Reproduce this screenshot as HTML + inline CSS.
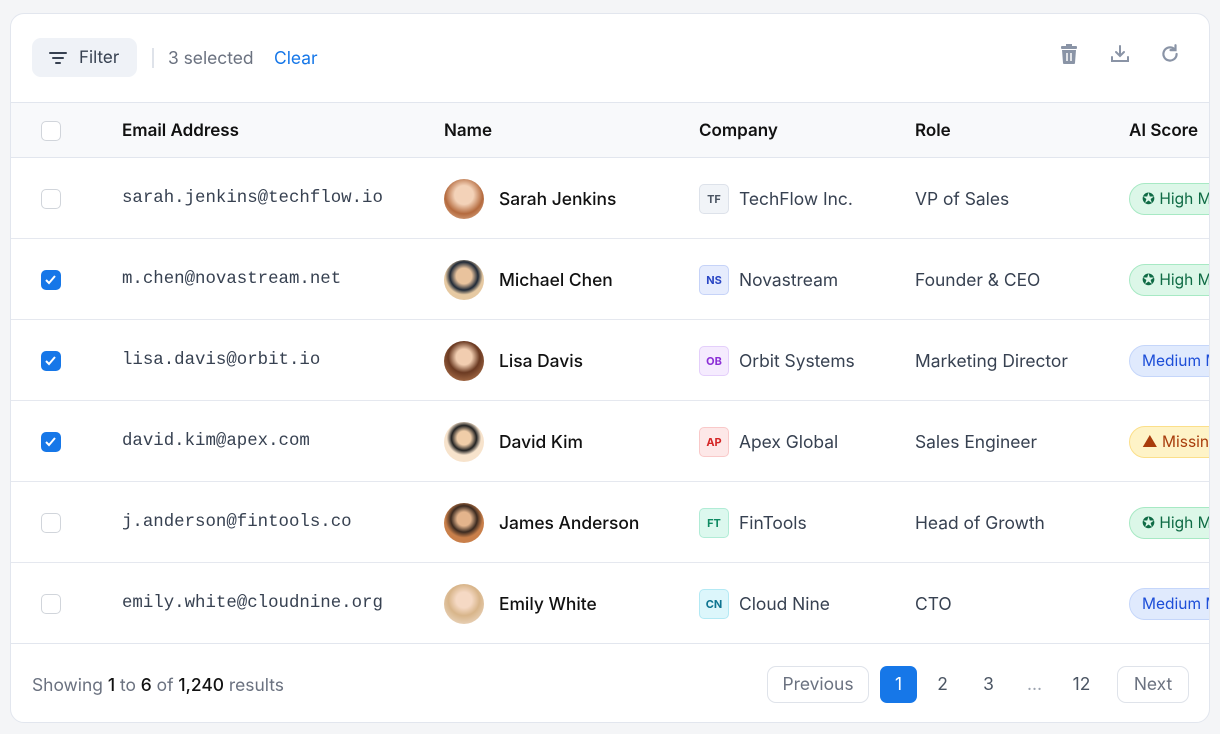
<!DOCTYPE html>
<html><head><meta charset="utf-8"><style>
*{box-sizing:border-box;margin:0;padding:0}
body{width:1220px;height:734px;background:#f4f5f7;font-family:"Inter","Liberation Sans",sans-serif;color:#111827;position:relative;overflow:hidden}
.card{position:absolute;left:10px;top:13px;width:1200px;height:710px;background:#fff;border:1px solid #e2e6ee;border-radius:14px;overflow:hidden}
.abs{position:absolute}
.filter{left:21px;top:24px;width:105px;height:39px;background:#eff2f7;border-radius:9px;font-size:17px;color:#374151}
.hdr{left:0;top:88px;width:1200px;height:56px;background:#f8f9fb;border-top:1px solid #e2e6ee;border-bottom:1px solid #e2e6ee}
.hdr span{position:absolute;top:18px;font-size:17px;font-weight:600;color:#111}
.row{position:absolute;left:0;width:1200px;height:81px;border-bottom:1px solid #e5e8ef}
.cb{position:absolute;left:30px;top:31px;width:20px;height:20px;border:1.5px solid #d1d5db;border-radius:5px;background:#fff}
.cb.on{background:#1677e8;border-color:#1677e8}
.email{position:absolute;left:111px;top:31px;font-family:"Liberation Mono",monospace;font-size:17.4px;color:#374151}
.av{position:absolute;left:433px;top:21px;width:40px;height:40px;border-radius:50%;overflow:hidden}
.name{position:absolute;left:488px;top:31px;font-size:17.4px;font-weight:500;color:#111}
.co{position:absolute;left:688px;top:26px;width:30px;height:30px;border-radius:5px;font-size:11px;font-weight:700;text-align:center;line-height:28px;border:1px solid}
.cot{position:absolute;left:728px;top:31px;font-size:17.4px;color:#374151}
.role{position:absolute;left:904px;top:31px;font-size:17.4px;color:#374151}
.pill{position:absolute;left:1118px;top:25px;width:140px;height:32px;border-radius:16px;border:1px solid;font-size:15.5px;line-height:30px;padding-left:12px;white-space:nowrap}
.pg{position:absolute;top:652px;height:37px;font-size:17.4px;color:#4b5563;text-align:center;line-height:37px}
.pgb{border:1px solid #dfe3ea;border-radius:9px;color:#6b7280;line-height:35px}
</style></head><body>
<div class="card">
<div class="abs filter"><svg class="abs" style="left:17px;top:13px" width="18" height="14" viewBox="0 0 18 14"><path d="M1 2h16M4 7h10M7 12h4" stroke="#374151" stroke-width="2" stroke-linecap="round"/></svg><span class="abs" style="left:47px;top:10px">Filter</span></div>
<div class="abs" style="left:141px;top:34px;width:2px;height:20px;background:#dfe3ea"></div>
<div class="abs" style="left:157px;top:34px;font-size:17.4px;color:#6b7280">3 selected</div>
<div class="abs" style="left:263px;top:34px;font-size:17.4px;color:#1677e8">Clear</div>
<svg class="abs" style="left:1049px;top:29px" width="18" height="22" viewBox="0 0 18 22"><rect x="1" y="3" width="16" height="3" rx="1" fill="#8a94a6"/><rect x="6" y="1" width="6" height="3" fill="#8a94a6"/><path d="M2 7h14l-1 13a1 1 0 0 1-1 1H4a1 1 0 0 1-1-1z" fill="#8a94a6"/><path d="M7 10v8M11 10v8" stroke="#fff" stroke-width="1.5"/></svg>
<svg class="abs" style="left:1099px;top:30px" width="20" height="20" viewBox="0 0 20 20"><path d="M10 2v10M6 8l4 4 4-4M2 13v4h16v-4" stroke="#8a94a6" stroke-width="2" fill="none" stroke-linecap="round"/></svg>
<svg class="abs" style="left:1148px;top:29px" width="22" height="22" viewBox="0 0 20 20"><path d="M16 10a6 6 0 1 1-2-4.5" stroke="#8a94a6" stroke-width="2" fill="none" stroke-linecap="round"/><path d="M15 2v4.5h-4.5" stroke="#8a94a6" stroke-width="2" fill="none" stroke-linecap="round"/></svg>
<div class="abs hdr"><div class="cb" style="top:18px"></div><span style="left:111px">Email Address</span><span style="left:433px">Name</span><span style="left:688px">Company</span><span style="left:904px">Role</span><span style="left:1118px">AI Score</span></div>

<div class="row" style="top:144px"><div class="cb"></div><div class="email">sarah.jenkins@techflow.io</div><div class="av" style="background:radial-gradient(circle at 50% 40%,#f3d2b8 30%,#b46a3e 60%,#e9c4a6)"></div><div class="name">Sarah Jenkins</div><div class="co" style="background:#f1f4f8;border-color:#dde2ea;color:#4b5563">TF</div><div class="cot">TechFlow Inc.</div><div class="role">VP of Sales</div><div class="pill" style="background:#dcf7e8;border-color:#a7e9c4;color:#0f6b45">✪ High M</div></div>
<div class="row" style="top:225px"><div class="cb on"><svg width="17" height="17" viewBox="0 0 17 17"><path d="M4 9l3 3 6-7" stroke="#fff" stroke-width="2" fill="none"/></svg></div><div class="email">m.chen@novastream.net</div><div class="av" style="background:radial-gradient(circle at 50% 40%,#e9c39d 25%,#1f2937 45%,#e6c9a2 60%)"></div><div class="name">Michael Chen</div><div class="co" style="background:#e6ecfd;border-color:#c6d3f8;color:#2a46c4">NS</div><div class="cot">Novastream</div><div class="role">Founder &amp; CEO</div><div class="pill" style="background:#dcf7e8;border-color:#a7e9c4;color:#0f6b45">✪ High M</div></div>
<div class="row" style="top:306px"><div class="cb on"><svg width="17" height="17" viewBox="0 0 17 17"><path d="M4 9l3 3 6-7" stroke="#fff" stroke-width="2" fill="none"/></svg></div><div class="email">lisa.davis@orbit.io</div><div class="av" style="background:radial-gradient(circle at 50% 40%,#f1cdb0 25%,#6b3a22 50%,#c98a5e)"></div><div class="name">Lisa Davis</div><div class="co" style="background:#f5ebfe;border-color:#e4cffb;color:#8b2fd6">OB</div><div class="cot">Orbit Systems</div><div class="role">Marketing Director</div><div class="pill" style="background:#e0eafd;border-color:#c5d6fa;color:#1d4ed8">Medium M</div></div>
<div class="row" style="top:387px"><div class="cb on"><svg width="17" height="17" viewBox="0 0 17 17"><path d="M4 9l3 3 6-7" stroke="#fff" stroke-width="2" fill="none"/></svg></div><div class="email">david.kim@apex.com</div><div class="av" style="background:radial-gradient(circle at 50% 40%,#f0cda8 22%,#222 40%,#f7e3cc 55%)"></div><div class="name">David Kim</div><div class="co" style="background:#fde8e8;border-color:#f9c9c9;color:#d42626">AP</div><div class="cot">Apex Global</div><div class="role">Sales Engineer</div><div class="pill" style="background:#fef3c7;border-color:#fbdf8a;color:#a83c0c">▲ Missing</div></div>
<div class="row" style="top:468px"><div class="cb"></div><div class="email">j.anderson@fintools.co</div><div class="av" style="background:radial-gradient(circle at 50% 40%,#e4b48c 22%,#3b2a20 42%,#c97f4a 60%)"></div><div class="name">James Anderson</div><div class="co" style="background:#dcf8ee;border-color:#b1ecd6;color:#0f8a62">FT</div><div class="cot">FinTools</div><div class="role">Head of Growth</div><div class="pill" style="background:#dcf7e8;border-color:#a7e9c4;color:#0f6b45">✪ High M</div></div>
<div class="row" style="top:549px;border-bottom:1px solid #e2e6ee"><div class="cb"></div><div class="email">emily.white@cloudnine.org</div><div class="av" style="background:radial-gradient(circle at 50% 40%,#f5d9c4 25%,#d8b58a 50%,#f3e4d6)"></div><div class="name">Emily White</div><div class="co" style="background:#dcf6fb;border-color:#b3e9f4;color:#0e7490">CN</div><div class="cot">Cloud Nine</div><div class="role">CTO</div><div class="pill" style="background:#e0eafd;border-color:#c5d6fa;color:#1d4ed8">Medium M</div></div>

<div class="abs" style="left:21px;top:661px;font-size:17.4px;color:#6b7280">Showing <b style="color:#111;font-weight:500">1</b> to <b style="color:#111;font-weight:500">6</b> of <b style="color:#111;font-weight:500">1,240</b> results</div>
<div class="pg pgb" style="left:756px;width:102px">Previous</div>
<div class="pg" style="left:869px;width:37px;background:#1677e8;color:#fff;border-radius:7px">1</div>
<div class="pg" style="left:913px;width:37px">2</div>
<div class="pg" style="left:959px;width:37px">3</div>
<div class="pg" style="left:1005px;width:37px;color:#9ca3af">…</div>
<div class="pg" style="left:1052px;width:37px">12</div>
<div class="pg pgb" style="left:1106px;width:72px">Next</div>
</div>
</body></html>
